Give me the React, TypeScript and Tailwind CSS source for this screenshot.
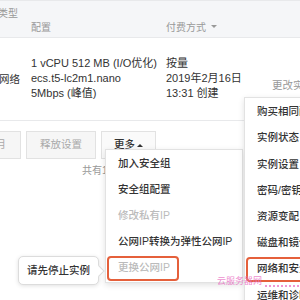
import React from 'react';

const font = { fontFamily: '"Liberation Sans", "Noto Sans CJK SC", sans-serif' };

const moreItems = [
  { label: '加入安全组' },
  { label: '安全组配置' },
  { label: '修改私有IP', disabled: true },
  { label: '公网IP转换为弹性公网IP' },
  { label: '更换公网IP', disabled: true, marked: true },
];

const sideItems = [
  { label: '购买相同配置' },
  { label: '实例状态' },
  { label: '实例设置' },
  { label: '密码/密钥' },
  { label: '资源变配' },
  { label: '磁盘和镜像' },
  { label: '网络和安全组', marked: true },
  { label: '运维和诊断' },
];

export default function App() {
  return (
    <div className="relative w-[300px] h-[300px] overflow-hidden bg-white text-[10.5px] text-[#333]" style={font}>
      {/* table header */}
      <div className="flex h-[38px] ml-[-22px] bg-[#f5f6f8] border-t border-b border-[#e8e9eb] text-[#999] text-[10px] whitespace-nowrap">
        <div className="w-[53px] shrink-0 pt-[5px]">网络类型</div>
        <div className="w-[135px] shrink-0 pt-[19px]">配置</div>
        <div className="flex-1 shrink-0 pt-[19px] flex items-start gap-[5px]">
          <span>付费方式</span>
          <span className="mt-[5px] border-x-[3px] border-x-transparent border-t-[3px] border-t-[#999]" />
        </div>
      </div>

      {/* instance row */}
      <div className="flex h-[83px] ml-[-22px] border-b border-[#e8e9eb] leading-[15px] text-[11px] whitespace-nowrap">
        <div className="w-[53px] shrink-0 flex items-center pt-[1px] text-[10.5px]">专有网络</div>
        <div className="w-[135px] shrink-0 pt-[18px]">
          <div>1 vCPU 512 MB (I/O优化)</div>
          <div>ecs.t5-lc2m1.nano</div>
          <div>5Mbps (峰值)</div>
        </div>
        <div className="w-[106px] shrink-0 pt-[18px]">
          <div>按量</div>
          <div>2019年2月16日</div>
          <div>13:31 创建</div>
        </div>
        <div className="shrink-0 pt-[40px] text-[10.5px] text-[#999]">更改实例规格</div>
      </div>

      {/* footer actions */}
      <div className="flex gap-[5px] mt-[10px] ml-[-120px] whitespace-nowrap">
        <button className="shrink-0 h-[28px] w-[141px] bg-[#f6f6f6] border border-[#e2e2e2] text-[#aaa] text-right pr-[14px]">按量付费转包年包月</button>
        <button className="shrink-0 h-[28px] w-[70px] bg-[#f6f6f6] border border-[#e2e2e2] text-[#aaa]">释放设置</button>
        <button className="shrink-0 h-[28px] w-[55px] bg-[#fafafa] border border-[#e2e2e2] text-[#333] font-medium flex items-center justify-center gap-[2px]">
          <span>更多</span>
          <span className="border-x-[3px] border-x-transparent border-b-[3px] border-b-[#333]" />
        </button>
      </div>
      <div className="pl-[82px] mt-[4px] text-[#999] text-[10px] whitespace-nowrap">共有1条</div>

      {/* more dropdown */}
      <div className="absolute left-[105px] top-[149px] w-[138px] py-[1px] bg-white border border-[#e2e2e2] shadow-[0_2px_6px_rgba(0,0,0,0.12)]">
        {moreItems.map(item => (
          <div
            key={item.label}
            className={`relative h-[26px] pl-[12px] flex items-center whitespace-nowrap font-medium ${item.disabled ? 'text-[#bbb]' : 'text-[#333]'}`}
          >
            {item.label}
            {item.marked && (
              <span className="absolute left-[1px] top-[1px] w-[72px] h-[25px] rounded-[4px] border-2 border-[#e5603b]" />
            )}
          </div>
        ))}
      </div>

      {/* side menu */}
      <div className="absolute left-[244px] top-[97px] w-[90px] py-[1px] bg-white border border-[#e2e2e2] shadow-[0_2px_6px_rgba(0,0,0,0.12)]">
        {sideItems.map(item => (
          <div key={item.label} className="relative h-[26.2px] pl-[12px] flex items-center whitespace-nowrap font-medium">
            {item.label}
            {item.marked && (
              <span className="absolute left-[1px] top-[1px] w-[80px] h-[25px] rounded-[4px] border-2 border-[#e5603b]" />
            )}
          </div>
        ))}
      </div>

      {/* tooltip */}
      <div className="absolute left-[18px] top-[256px] h-[29px] px-[8px] flex items-center whitespace-nowrap font-medium bg-white border border-[#dcdcdc] rounded-[5px] shadow-[0_1px_4px_rgba(0,0,0,0.12)]">
        请先停止实例
        <span className="absolute right-[-5px] top-[10px] w-[8px] h-[8px] bg-white border-t border-r border-[#dcdcdc] rotate-45" />
      </div>

      {/* watermark */}
      <div className="absolute left-[217px] top-[275px] flex items-end gap-[3px] whitespace-nowrap text-[9px] text-[#e86bc2]/80">
        <span>云服务器网</span>
        <span className="mb-[2px] w-[38px] border-b-2 border-dotted border-[#e86bc2]/70" />
      </div>
    </div>
  );
}
